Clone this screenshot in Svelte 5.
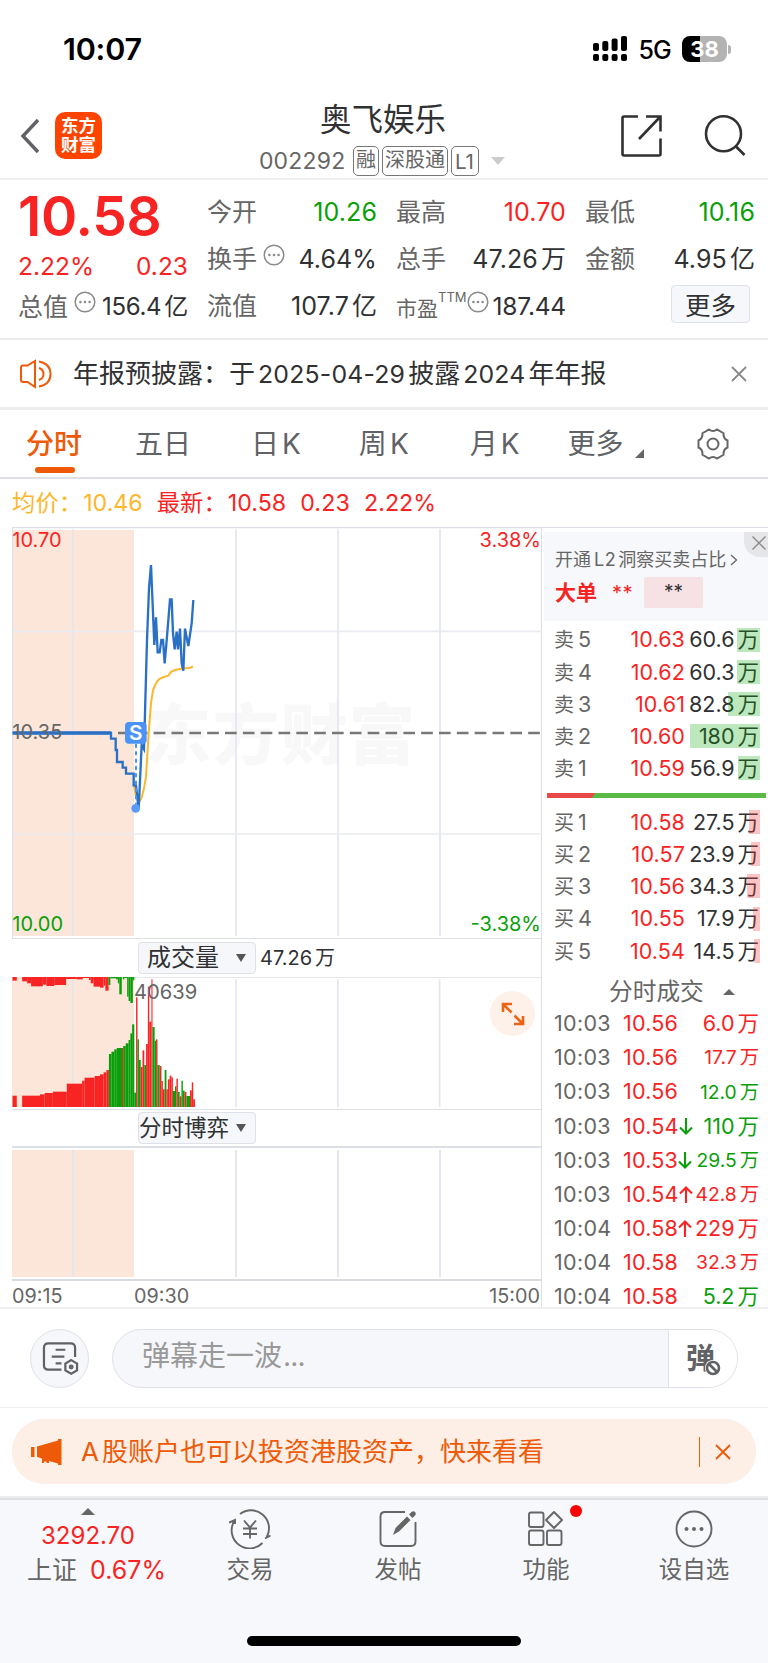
<script lang="ts">
    const quotes = [
        [
            { label: '今开', value: '10.26', tone: 'green' },
            { label: '换手', value: '4.64%', tip: true },
            { label: '流值', value: '107.7', unit: '亿' },
        ],
        [
            { label: '最高', value: '10.70', tone: 'red' },
            { label: '总手', value: '47.26', unit: '万' },
            { label: '市盈', value: '187.44', tip: true, sup: 'TTM' },
        ],
        [
            { label: '最低', value: '10.16', tone: 'green' },
            { label: '金额', value: '4.95', unit: '亿' },
        ],
    ];

    const asks = [
        { label: '卖', level: 5, price: '10.63', volume: '60.6', bar: 23 },
        { label: '卖', level: 4, price: '10.62', volume: '60.3', bar: 23 },
        { label: '卖', level: 3, price: '10.61', volume: '82.8', bar: 32 },
        { label: '卖', level: 2, price: '10.60', volume: '180', bar: 70 },
        { label: '卖', level: 1, price: '10.59', volume: '56.9', bar: 22 },
    ];

    const bids = [
        { label: '买', level: 1, price: '10.58', volume: '27.5', bar: 11 },
        { label: '买', level: 2, price: '10.57', volume: '23.9', bar: 9 },
        { label: '买', level: 3, price: '10.56', volume: '34.3', bar: 13 },
        { label: '买', level: 4, price: '10.55', volume: '17.9', bar: 7 },
        { label: '买', level: 5, price: '10.54', volume: '14.5', bar: 6 },
    ];

    const trades = [
        { time: '10:03', price: '10.56', volume: '6.0', tone: 'red' },
        { time: '10:03', price: '10.56', volume: '17.7', tone: 'red', small: true },
        { time: '10:03', price: '10.56', volume: '12.0', tone: 'green', small: true },
        { time: '10:03', price: '10.54', volume: '110', tone: 'green', dir: 'down' },
        { time: '10:03', price: '10.53', volume: '29.5', tone: 'green', dir: 'down', small: true },
        { time: '10:03', price: '10.54', volume: '42.8', tone: 'red', dir: 'rise', small: true },
        { time: '10:04', price: '10.58', volume: '229', tone: 'red', dir: 'rise' },
        { time: '10:04', price: '10.58', volume: '32.3', tone: 'red', small: true },
        { time: '10:04', price: '10.58', volume: '5.2', tone: 'green' },
    ];

    const RED = '#f82424';
    const GREEN = '#0a9f0a';

    // [x start, x end, y] measured from the top edge
    const topBars: [number, number, number, string][] = [
        [35, 47, 182, RED], [62, 76, 184, RED], [76, 87, 190, RED], [87, 120, 199, RED],
        [120, 130, 194, RED], [130, 152, 198, RED], [152, 185, 195, RED], [185, 215, 177, RED],
        [215, 232, 178, RED], [232, 249, 174, RED], [249, 254, 180, RED], [254, 262, 190, RED],
        [262, 280, 200, RED], [280, 290, 203, RED], [290, 295, 197, RED], [295, 304, 212, RED],
        [304, 309, 195, GREEN], [309, 325, 175, GREEN], [325, 330, 178, GREEN], [330, 334, 190, GREEN],
        [334, 341, 223, GREEN], [344, 348, 178, GREEN], [348, 356, 174, GREEN], [356, 360, 230, GREEN],
        [360, 365, 243, GREEN], [365, 372, 249, GREEN], [372, 376, 181, GREEN],
    ];

    // [x start, x end, y] standing on the baseline
    const bottomBars: [number, number, number, string][] = [
        [35, 47, 527, RED], [62, 112, 527, RED], [112, 125, 523, RED], [125, 148, 519, RED],
        [148, 187, 515, RED], [187, 230, 491, RED], [230, 237, 482, RED], [237, 265, 473, RED],
        [265, 280, 468, RED], [280, 290, 463, RED], [290, 298, 457, RED], [298, 305, 450, RED],
        [305, 312, 402, GREEN], [312, 320, 395, GREEN], [320, 327, 388, GREEN], [327, 345, 384, GREEN],
        [345, 352, 378, GREEN], [352, 360, 370, GREEN], [360, 365, 360, GREEN], [365, 370, 340, GREEN],
        [370, 376, 313, GREEN], [341, 344, 384, RED], [376, 381, 518, GREEN], [381, 385, 232, RED],
        [385, 389, 358, GREEN], [389, 394, 420, GREEN], [394, 399, 441, RED], [399, 404, 391, RED],
        [404, 409, 435, GREEN], [409, 414, 372, RED], [414, 418, 200, RED], [418, 424, 305, RED],
        [424, 427, 178, RED], [427, 433, 321, GREEN], [433, 437, 362, GREEN], [437, 441, 358, RED],
        [441, 447, 435, GREEN], [447, 452, 438, RED], [452, 456, 483, RED], [456, 461, 508, RED],
        [461, 466, 450, GREEN], [466, 470, 508, RED], [470, 475, 478, RED], [475, 480, 467, RED],
        [480, 484, 472, RED], [484, 490, 513, GREEN], [490, 494, 499, GREEN], [494, 498, 476, RED],
        [498, 503, 516, GREEN], [503, 508, 529, RED], [508, 512, 482, GREEN], [512, 517, 512, GREEN],
        [517, 522, 516, RED], [522, 532, 528, GREEN], [532, 537, 511, RED], [537, 541, 487, RED],
        [541, 546, 538, RED],
    ];
</script>

{#snippet tipIcon()}
    <svg class="tip" viewBox="0 0 22 22">
        <circle cx="11" cy="11" r="9.8" fill="none" stroke="#8a8a8a" stroke-width="1.5" />
        <circle cx="6.4" cy="11" r="1.3" /><circle cx="11" cy="11" r="1.3" /><circle cx="15.6" cy="11" r="1.3" />
    </svg>
{/snippet}

{#snippet bookRow(row, side)}
    <div class="book-row">
        <span class="level">{row.label}<i>{row.level}</i></span>
        <span class="price">{row.price}</span>
        <span class="volume">{row.volume}<b>万</b></span>
        <span class="depth {side}" style="width: {row.bar}px"></span>
    </div>
{/snippet}

<div class="app">
    <div class="status">
        <span class="clock">10:07</span>
        <svg class="signal" viewBox="0 0 34 26">
            <rect x="0" y="7" width="6" height="8" rx="2" /><rect x="9.3" y="5" width="6" height="10" rx="2" />
            <rect x="18.6" y="2.5" width="6" height="12.500" rx="2" /><rect x="28" y="0" width="6" height="15" rx="2" />
            <rect x="0" y="18" width="6" height="7" rx="2" /><rect x="9.3" y="18" width="6" height="7" rx="2" />
            <rect x="18.6" y="18" width="6" height="7" rx="2" /><rect x="28" y="18" width="6" height="7" rx="2" />
        </svg>
        <span class="network">5G</span>
        <div class="battery"><span>38</span></div>
        <i class="nub"></i>
    </div>

    <header>
        <svg class="back" viewBox="0 0 20 36"><path d="M18 2 3 18l15 16" /></svg>
        <div class="logo">东方<br />财富</div>
        <div class="title">
            <h1>奥飞娱乐</h1>
            <div class="code">
                <span class="digits">002292</span>
                <span class="badge">融</span><span class="badge">深股通</span><span class="badge latin">L1</span>
                <i class="caret"></i>
            </div>
        </div>
        <svg class="share" viewBox="0 0 44 44">
            <path d="M19 3.5H5q-1.500 0-1.500 1.500v36q0 1.500 1.500 1.500h35q1.500 0 1.500-1.500V25.500M27 3.500h14.500v15M41 4 20 26" />
        </svg>
        <svg class="search" viewBox="0 0 44 44"><circle cx="20.500" cy="20.700" r="17.500" /><path d="m33 33.500 8.500 8.500" /></svg>
    </header>

    <section class="stats">
        <div class="col first">
            <div class="big">10.58</div>
            <div class="cell change red"><span>2.22%</span><span>0.23</span></div>
            <div class="cell"><span class="name">总值</span>{@render tipIcon()}<span class="value">156.4<b>亿</b></span></div>
        </div>
        {#each quotes as column}
            <div class="col">
                {#each column as q}
                    <div class="cell">
                        <span class="name" class:narrow={q.sup}>{q.label}</span>
                        {#if q.sup}<span class="sup">{q.sup}</span>{/if}
                        {#if q.tip}{@render tipIcon()}{/if}
                        <span class="value {q.tone}">{q.value}{#if q.unit}<b>{q.unit}</b>{/if}</span>
                    </div>
                {/each}
                {#if column.length < 3}
                    <button class="more">更多</button>
                {/if}
            </div>
        {/each}
    </section>

    <section class="notice">
        <svg class="speaker" viewBox="0 0 34 30">
            <path d="M2 8.500q0-2 2-2h4.500L16 2v26l-7.500-5H4q-2 0-2-2zM20 9q4.500 1.500 4.500 6T20 21M20 2.500q11.500 2 11.500 12.500T20 27.500" />
        </svg>
        <p>年报预披露：于<span>2025-04-29</span>披露<span>2024</span>年年报</p>
        <svg class="close" viewBox="0 0 16 16"><path d="m1 1 14 14M15 1 1 15" /></svg>
    </section>

    <nav class="tabs">
        <span class="tab active">分时</span>
        <span class="tab">五日</span>
        <span class="tab">日<i>K</i></span>
        <span class="tab">周<i>K</i></span>
        <span class="tab">月<i>K</i></span>
        <span class="tab more-tab">更多</span>
        <svg class="gear" viewBox="0 0 32 32">
            <path d="M12 1.500q4 3 8 0l6.500 3.700q-.3 5.500 4 7.300v7q-4.300 1.800-4 7.300L20 30.500q-4-3-8 0l-6.500-3.700q.3-5.500-4-7.300v-7q4.300-1.800 4-7.300z" />
            <circle cx="16" cy="16" r="5.500" />
        </svg>
    </nav>

    <div class="legend">
        <span class="avg">均价：</span><span class="avg n1">10.46</span>
        <span>最新：</span><span class="n2">10.58</span><span class="n3">0.23</span><span>2.22%</span>
    </div>

    <section class="market">
        <div class="charts">
            <svg class="price-chart" viewBox="36 21 1590 1236">
                <rect x="36" y="30" width="366" height="1218" fill="#fce6da" />
                <text class="watermark" x="434" y="718">东方财富</text>
                <g stroke="#e3e6ed" stroke-width="5">
                    <path d="M219 28v1220M708 28v1220M1014 28v1220M1320 28v1220" />
                    <path d="M36 334h1590M36 942h1590" stroke="#e9ebf1" />
                    <path d="M36 23h1590M37.500 21v1236M36 1256h1590" stroke="#dcdfe6" stroke-width="4" />
                </g>
                <path d="M354 639H1624" stroke="#777" stroke-width="7" stroke-dasharray="35 18.500" />
                <g class="axis">
                    <text x="37" y="81" fill={RED}>10.70</text>
                    <text x="1623" y="81" fill={RED} text-anchor="end">3.38%</text>
                    <text x="37" y="1234" fill={GREEN}>10.00</text>
                    <text x="1623" y="1234" fill={GREEN} text-anchor="end">-3.38%</text>
                </g>
                <path
                    d="M401 790 408 830 418 845 424 835 432 805 438 770 446 640 453 550 459 510 468 490 475 480 484 474 495 470 505 467 514 455 525 450 545 446 571 443 579 439"
                    fill="none" stroke="#fdb72d" stroke-width="6"
                />
                <path
                    d="M38 639H333V656H347V690H351V726H368V743H378V761H401V796H408L416 868 425 675 432 688 441 360 447 205 453 135 463 375 468 292 473 397H479L484 360H489L494 430 501 350 510 238H515L519 340 524 388 530 335 534 388 540 326 545 430 550 452 555 326 565 378 575 310 580 240"
                    fill="none" stroke="#2a70c4" stroke-width="7"
                />
                <path d="M38 639H333" stroke="#2a70c4" stroke-width="11" />
                <text class="axis" x="37" y="658" fill="#666">10.35</text>
                <path d="M408 672V852" stroke="#4c93f8" stroke-width="6" stroke-dasharray="12 10" />
                <circle cx="407" cy="865" r="13" fill="#5a9bf8" />
                <rect x="375" y="606" width="65" height="65" rx="12" fill="#4c93f8" />
                <text class="marker" x="407.500" y="661">S</text>
            </svg>

            <div class="bar-head">
                <div class="select wide">成交量<i></i></div>
                <span class="total">47.26<b>万</b></span>
            </div>

            <div class="volume-box">
                <svg viewBox="33.600 171 1484 396" preserveAspectRatio="none">
                    <rect x="33.600" y="171" width="342" height="390" fill="#fce6da" />
                    <path d="M204.500 171v390M661 178v383M946 178v383M1231 178v383" stroke="#e3e6ed" stroke-width="4.500" />
                    <path d="M33.600 171h1484" stroke="#dcdfe6" stroke-width="4" />
                    {#each topBars as [x1, x2, y, color]}
                        <rect x={x1} y="171" width={x2 - x1} height={y - 171} fill={color} />
                    {/each}
                    {#each bottomBars as [x1, x2, y, color]}
                        <rect x={x1} {y} width={x2 - x1} height={561 - y} fill={color} />
                    {/each}
                </svg>
                <span class="peak">40639</span>
                <div class="expand">
                    <svg viewBox="0 0 24 24"><path d="M2 10V2h9M2.500 2.500l8 8M22 14v8h-9M21.500 21.500l-8-8" /></svg>
                </div>
            </div>

            <div class="bar-head second">
                <div class="select">分时博弈<i></i></div>
            </div>

            <div class="game-box">
                <div class="auction"></div>
                <div class="g1"></div><div class="g2"></div><div class="g2"></div>
            </div>

            <div class="times"><span>09:15</span><span>09:30</span><span class="end">15:00</span></div>
        </div>

        <aside>
            <div class="level2">
                <div class="promo-line">开通<i>L2</i>洞察买卖占比<svg viewBox="0 0 8 12"><path d="m1 1 5.500 5L1 11" /></svg></div>
                <div class="big-order"><strong>大单</strong><span class="stars">**</span><span class="masked">**</span></div>
                <div class="corner"><svg viewBox="0 0 14 14"><path d="m.5.5 13 13M13.500.5l-13 13" /></svg></div>
            </div>
            <div class="book">
                {#each asks as row}{@render bookRow(row, 'sell')}{/each}
            </div>
            <div class="ratio"></div>
            <div class="book buy-side">
                {#each bids as row}{@render bookRow(row, 'buy')}{/each}
            </div>
            <div class="trades-head">分时成交<i></i></div>
            {#each trades as t}
                <div class="trade">
                    <span class="time">{t.time}</span>
                    <span class="deal">{t.price}</span>
                    {#if t.dir}
                        <svg class="arrow {t.tone} {t.dir}" viewBox="0 0 14 17"><path d="M7 0v15M1 9.500l6 6 6-6" /></svg>
                    {/if}
                    <span class="amount {t.tone}" class:small={t.small}>{t.volume}<b>万</b></span>
                </div>
            {/each}
        </aside>
    </section>

    <section class="danmaku">
        <div class="round">
            <svg viewBox="0 0 38 36">
                <path d="M34 16.500V7q0-4.500-4.500-4.500h-23Q2 2.500 2 7v18q0 4.500 4.500 4.500H20M14 9h10M10 16h13M14 23h6" />
                <path d="m30 19.700 6 3.500v7l-6 3.500-6-3.500v-7z" />
                <circle cx="30" cy="26.700" r="1.400" />
            </svg>
        </div>
        <div class="field">
            <span class="placeholder">弹幕走一波<i>...</i></span>
            <div class="toggle">
                弹
                <svg viewBox="0 0 16 16"><circle cx="8" cy="8" r="6" /><path d="m4 4 8 8" /></svg>
            </div>
        </div>
    </section>

    <section class="banner-wrap">
        <div class="banner">
            <svg class="horn" viewBox="0 0 31 26">
                <path d="M0 8h3.500v10H0zM6 7.500 27 1.500V0h3.500v26H27v-1.500L18 22v2h-2.500v-1.500H13V24h-2v-4.500l-5-1.500z" />
            </svg>
            <p>A<span>股账户也可以投资港股资产，快来看看</span></p>
            <i class="bar"></i>
            <svg class="close" viewBox="0 0 16 16"><path d="m1 1 14 14M15 1 1 15" /></svg>
        </div>
    </section>

    <footer>
        <div class="items">
            <div class="index">
                <i class="up"></i>
                <span class="red">3292.70</span>
                <div><em>上证</em><span class="red">0.67%</span></div>
            </div>
            <div class="item">
                <svg viewBox="0 0 42 40">
                    <path d="M11 5A18 18 0 0 1 38 27.500l-.5 1.500M36 29.500l5.500-3M33.500 34A18 18 0 0 1 5 12.500l.5-1.500M0 13.500 6 11v4" />
                    <path d="m15 11.500 6 7 6-7M21 18.500v11M14 19.500h14M14 25h14" />
                </svg>
                交易
            </div>
            <div class="item">
                <svg viewBox="0 0 42 40">
                    <path d="M28 3H8Q3.500 3 3.500 7.500v25Q3.500 37 8 37h26q4.500 0 4.500-4.500V13" />
                    <path class="pencil" d="m16 26 2.500-7L30 7.500l3.500 3.500L22 22.500zM32 5.500l2.500-2.500q2-1.500 3.500 0t0 3.500L35.500 9z" />
                </svg>
                发帖
            </div>
            <div class="item">
                <svg viewBox="0 0 42 40">
                    <rect x="4" y="3.500" width="14.500" height="14.500" rx="2" /><rect x="4" y="21.500" width="14.500" height="14.500" rx="2" />
                    <rect x="22" y="21.500" width="14.500" height="14.500" rx="2" /><path d="m29 3 8 8-8 8-8-8z" stroke-linejoin="round" />
                </svg>
                功能
                <b class="dot"></b>
            </div>
            <div class="item">
                <svg viewBox="0 0 42 40">
                    <circle cx="21" cy="20" r="17.500" />
                    <g class="dots"><circle cx="13.500" cy="20" r="2" /><circle cx="21" cy="20" r="2" /><circle cx="28.500" cy="20" r="2" /></g>
                </svg>
                设自选
            </div>
        </div>
        <div class="home"></div>
    </footer>
</div>

<style>
    :global(body) {
        background: #fff;
    }

    .app {
        width: 768px;
        height: 1663px;
        overflow: hidden;
        display: flex;
        flex-direction: column;
        font-family: Inter, 'Noto Sans CJK SC', sans-serif;
        line-height: 1;
        color: #303133;
        background: #fff;
        white-space: nowrap;
    }

    .app * {
        box-sizing: border-box;
    }

    i,
    em {
        font-style: normal;
    }

    svg {
        flex: none;
        fill: none;
    }

    .red {
        color: #f82424;
    }

    .green {
        color: #0a9f0a;
    }

    .status {
        height: 95px;
        flex: none;
        display: flex;
        align-items: center;
        padding: 3px 37px 0 63px;
        color: #000;
    }

    .clock {
        font-size: 30.5px;
        font-weight: 600;
        letter-spacing: -0.2px;
        margin-right: auto;
    }

    .signal {
        width: 34px;
        height: 26px;
        fill: #000;
    }

    .network {
        font-size: 25px;
        font-weight: 500;
        margin: 2px 11px 0;
        letter-spacing: -0.8px;
    }

    .battery {
        width: 45px;
        height: 26px;
        border-radius: 8px;
        background: linear-gradient(90deg, #000 39%, #b3b3b3 39%);
        color: #fff;
        font-size: 22px;
        font-weight: 700;
        display: flex;
        align-items: center;
        justify-content: center;
    }

    .nub {
        width: 3px;
        height: 9px;
        margin-left: 1px;
        border-radius: 0 4px 4px 0;
        background: #b3b3b3;
    }

    header {
        height: 85px;
        flex: none;
        display: flex;
        border-bottom: 2px solid #efeff2;
        padding: 0 21px 0 20px;
    }

    .back {
        width: 20px;
        height: 36px;
        margin-top: 23px;
        stroke: #606266;
        stroke-width: 3.4;
    }

    .logo {
        width: 47px;
        height: 47px;
        margin: 17px 0 0 15px;
        border-radius: 10px;
        background: #ff4400;
        color: #fff;
        font-size: 17.5px;
        line-height: 19px;
        font-weight: 700;
        text-align: center;
        padding-top: 4px;
    }

    .title {
        width: 518px;
        padding: 9px 0 0 157px;
    }

    h1 {
        margin: 0 0 0 61px;
        font-size: 31.5px;
        line-height: 32px;
        font-weight: 400;
    }

    .code {
        display: flex;
        align-items: center;
        margin-top: 10px;
        color: #666;
        font-size: 22px;
    }

    .digits {
        width: 94px;
        font-size: 23px;
        letter-spacing: 0.2px;
    }

    .badge {
        height: 30px;
        border: 1.5px solid #777;
        border-radius: 5px;
        padding: 3px 2px 0;
        margin-right: 3px;
        font-size: 20px;
        line-height: 21px;
    }

    .latin {
        width: 28px;
        padding: 4px 0 0 3px;
        font-size: 20.5px;
    }

    .caret {
        margin-left: 9px;
        border: 7px solid transparent;
        border-top: 8px solid #ccc;
        border-bottom: 0;
    }

    .share {
        width: 44px;
        height: 44px;
        margin-top: 18px;
        stroke: #303133;
        stroke-width: 2.6;
    }

    .search {
        width: 44px;
        height: 44px;
        margin: 18px 0 0 40px;
        stroke: #303133;
        stroke-width: 2.6;
    }

    .stats {
        height: 160px;
        flex: none;
        display: grid;
        grid-template-columns: repeat(4, 170px);
        gap: 19px;
        padding: 9px 0 0 18px;
        border-bottom: 2px solid #ebebed;
        font-size: 24.5px;
    }

    .cell {
        height: 47px;
        display: flex;
        align-items: center;
    }

    .name {
        color: #666;
        font-size: 25px;
    }

    .name.narrow {
        font-size: 21px;
        padding-top: 4px;
    }

    .value {
        margin-left: auto;
        font-size: 25px;
        letter-spacing: 0.1px;
    }

    .value b,
    .total b,
    .volume b,
    .amount b {
        font-weight: 400;
        margin-left: 3px;
    }

    .tip {
        width: 22px;
        height: 22px;
        margin: -10px 0 0 6px;
        fill: #8a8a8a;
    }

    .first .value {
        font-size: 24px;
        letter-spacing: -0.3px;
    }

    .sup {
        font-size: 13px;
        color: #666;
        margin-top: -18px;
    }

    .sup + .tip {
        margin-left: 0;
    }

    .sup ~ .value {
        font-size: 24.5px;
        letter-spacing: -0.2px;
    }

    .first .big {
        height: 58px;
        line-height: 54px;
        font-size: 55px;
        font-weight: 600;
        color: #f82424;
        letter-spacing: -0.3px;
    }

    .first .change {
        height: 39px;
        justify-content: space-between;
    }

    .first .cell:last-child {
        height: 42px;
    }

    .more {
        display: block;
        width: 79px;
        height: 38px;
        margin: 2px 0 0 86px;
        border: 1.5px solid #dfe1e8;
        border-radius: 4px;
        background: #f6f7fa;
        color: #303133;
        font: 25.5px/34px 'Noto Sans CJK SC', sans-serif;
        padding: 0;
    }

    .notice {
        height: 70px;
        flex: none;
        display: flex;
        align-items: center;
        padding: 0 21px 0 19px;
        border-bottom: 3px solid #eeeeef;
    }

    .speaker {
        width: 34px;
        height: 30px;
        stroke: #ee5a07;
        stroke-width: 2;
    }

    .notice p {
        margin: 0 auto 0 20px;
        font-size: 26px;
    }

    .notice p span {
        font-size: 24.8px;
        margin: 0 3px;
        letter-spacing: 0.2px;
    }

    .close {
        width: 16px;
        height: 16px;
        stroke: #888;
        stroke-width: 1.8;
    }

    .tabs {
        height: 69px;
        flex: none;
        display: flex;
        border-bottom: 2px solid #dfe0e6;
        padding-left: 26px;
        color: #606266;
        font-size: 28px;
        line-height: 68px;
    }

    .tab {
        position: relative;
        margin-right: 61px;
    }

    .tab:nth-child(1) {
        margin-right: 53px;
    }

    .tab:nth-child(2) {
        margin-right: 60px;
    }

    .tab:nth-child(3) {
        margin-right: 58px;
    }

    .tab:nth-child(5) {
        margin-right: 48px;
    }

    .tab i {
        margin-left: 3px;
    }

    .active {
        color: #ee5a07;
        font-weight: 500;
    }

    .active::after {
        content: '';
        position: absolute;
        left: 9px;
        bottom: 4px;
        width: 40px;
        height: 6px;
        border-radius: 3px;
        background: #ee5a07;
    }

    .tab.more-tab {
        margin-right: 73px;
    }

    .more-tab::after {
        content: '';
        position: absolute;
        right: -20px;
        bottom: 19px;
        border-left: 9px solid transparent;
        border-bottom: 9px solid #666;
    }

    .gear {
        width: 32px;
        height: 32px;
        margin-top: 18px;
        stroke: #666;
        stroke-width: 2;
    }

    .legend {
        height: 48px;
        flex: none;
        display: flex;
        align-items: center;
        padding: 1px 0 0 12px;
        font-size: 23.2px;
        color: #f82424;
    }

    .legend > span:nth-child(odd) {
        letter-spacing: 0.2px;
    }

    .avg {
        color: #fdb72d;
    }

    .n1,
    .n2,
    .n3 {
        margin-right: 14px;
    }

    .legend .n1,
    .legend .n2 {
        margin-left: 1px;
    }

    .market {
        height: 782px;
        flex: none;
        display: flex;
        border-bottom: 2px solid #efeff1;
    }

    .charts {
        width: 542px;
        padding-left: 12px;
        border-right: 1.5px solid #dcdfe6;
    }

    .price-chart {
        display: block;
        width: 530px;
        height: 412px;
        font-family: Inter, 'Noto Sans CJK SC', sans-serif;
    }

    .axis,
    .axis text {
        font-size: 60px;
    }

    .watermark {
        font-size: 199px;
        font-weight: 900;
        fill: #f8f8f8;
        letter-spacing: 5px;
    }

    .marker {
        font-size: 62px;
        font-weight: 600;
        fill: #fff;
        text-anchor: middle;
    }

    .bar-head {
        height: 38px;
        display: flex;
        align-items: center;
        padding-left: 126px;
        font-size: 20px;
    }

    .select {
        width: 118px;
        height: 32px;
        display: flex;
        align-items: center;
        border: 1.5px solid #dfe1e8;
        border-radius: 4px;
        background: #f6f7fa;
        font-size: 22.5px;
        margin-right: 4px;
    }

    .select.wide {
        font-size: 24px;
        padding-left: 8px;
    }

    .select i {
        margin: 0 9px 0 auto;
        border: 5px solid transparent;
        border-top: 8px solid #555;
        border-bottom: 0;
    }

    .volume-box {
        position: relative;
        height: 132px;
    }

    .volume-box > svg {
        display: block;
        width: 530px;
        height: 132px;
    }

    .peak {
        position: absolute;
        left: 122px;
        top: 5px;
        font-size: 20.2px;
        color: #666;
    }

    .expand {
        position: absolute;
        left: 478px;
        top: 14px;
        width: 45px;
        height: 45px;
        border-radius: 50%;
        background: #fef1ea;
        display: flex;
        align-items: center;
        justify-content: center;
    }

    .expand svg {
        width: 24px;
        height: 24px;
        stroke: #ee6213;
        stroke-width: 2.6;
    }

    .bar-head.second {
        height: 39px;
        border-top: 1.5px solid #dcdfe6;
        border-bottom: 2px solid #dcdfe6;
    }

    .game-box {
        height: 133px;
        padding: 2px 0;
        display: flex;
        border-bottom: 2px solid #d8dbe0;
    }

    .auction {
        width: 122px;
        background: linear-gradient(90deg, transparent 60px, #e3e6ed 60px, #e3e6ed 61.5px, transparent 61.5px) #fce6da;
    }

    .g1,
    .g2 {
        width: 103px;
        border-right: 2px solid #e3e6ed;
    }

    .g2 {
        width: 102px;
    }

    .times {
        display: flex;
        padding: 6px 1px 0 0;
        font-size: 19.8px;
        color: #666;
    }

    .times span {
        width: 122px;
    }

    .times .end {
        width: auto;
        margin-left: auto;
    }

    aside {
        width: 226px;
        border-top: 1.5px solid #dcdfe6;
    }

    .level2 {
        position: relative;
        height: 89px;
        margin: 4px 0 0 2px;
        padding: 18px 0 0 11px;
        background: #f7f8fb;
        color: #666;
    }

    .promo-line {
        height: 20px;
        display: flex;
        align-items: center;
        font-size: 18px;
    }

    .promo-line i {
        margin: 0 2px 0 3px;
        letter-spacing: 0.5px;
    }

    .promo-line svg {
        width: 8px;
        height: 12px;
        margin-left: 4px;
        stroke: #666;
        stroke-width: 1.3;
    }

    .big-order {
        display: flex;
        align-items: center;
        margin-top: 7px;
        font-size: 21px;
        color: #f82424;
    }

    .stars {
        margin: 0 11px 0 15px;
        font-size: 20px;
        letter-spacing: 0.5px;
    }

    .masked {
        width: 59px;
        height: 31px;
        line-height: 30px;
        border-radius: 2px;
        background: #f6e1e4;
        color: #303133;
        font-size: 19px;
        text-align: center;
    }

    .corner {
        position: absolute;
        right: 0;
        top: 0;
        width: 24px;
        height: 25px;
        border-radius: 0 0 0 16px;
        background: #e6e6e8;
        padding: 4px 0 0 8px;
    }

    .corner svg {
        width: 14px;
        height: 14px;
        stroke: #888;
        stroke-width: 1.3;
    }

    .book {
        padding-top: 3px;
        height: 172px;
    }

    .book-row {
        position: relative;
        height: 32.2px;
        display: flex;
        align-items: center;
        padding: 0 9px 0 12px;
        font-size: 21.5px;
    }

    .level {
        width: 56px;
        color: #666;
        font-size: 20px;
    }

    .level i {
        font-size: 21.5px;
        margin-left: 4px;
    }

    .price {
        width: 75px;
        text-align: right;
        color: #f82424;
        letter-spacing: 0.1px;
    }

    .volume {
        margin-left: auto;
        font-size: 21.5px;
    }

    .depth {
        position: absolute;
        right: 8px;
        top: 3.5px;
        height: 24px;
        background: rgba(10, 170, 10, 0.27);
    }

    .depth.buy {
        background: rgba(250, 60, 60, 0.3);
    }

    .ratio {
        height: 5px;
        margin: 0 2px 0 5px;
        background: linear-gradient(125deg, #e84848 39px, #5bb946 40px);
    }

    .buy-side {
        padding-top: 8.5px;
        height: 168px;
    }

    .trades-head {
        height: 41px;
        display: flex;
        align-items: center;
        padding: 11px 0 0 67px;
        font-size: 23.7px;
        color: #666;
    }

    .trades-head i {
        margin-left: 19px;
        border: 6px solid transparent;
        border-bottom: 6px solid #666;
        border-top: 0;
    }

    .trade {
        height: 34.1px;
        display: flex;
        align-items: center;
        padding: 0 9px 0 12px;
        font-size: 21.5px;
    }

    .time {
        width: 69px;
        color: #666;
        letter-spacing: 0.3px;
    }

    .deal {
        color: #f82424;
        letter-spacing: 0.2px;
    }

    .arrow {
        width: 14px;
        height: 17px;
        stroke: currentColor;
        stroke-width: 2.1;
    }

    .arrow.rise {
        transform: scaleY(-1);
    }

    .amount {
        margin-left: auto;
    }

    .amount.small {
        font-size: 19.3px;
    }

    .danmaku {
        height: 99px;
        flex: none;
        display: flex;
        padding: 20px 30px 0;
        border-bottom: 1.5px solid #f0f0f2;
    }

    .round {
        width: 59px;
        height: 59px;
        border: 1.5px solid #dfe1e8;
        border-radius: 50%;
        background: #f6f7fa;
        padding: 11px 0 0 11px;
    }

    .round svg {
        width: 37px;
        height: 35px;
        stroke: #606266;
        stroke-width: 2.3;
    }

    .field {
        width: 626px;
        height: 59px;
        margin-left: 23px;
        display: flex;
        border: 1.5px solid #dfe1e8;
        border-radius: 30px;
        background: #f6f7fa;
        overflow: hidden;
    }

    .placeholder {
        width: 555px;
        padding: 12px 0 0 29px;
        font-size: 28px;
        color: #999;
    }

    .placeholder i {
        margin-left: 1px;
        letter-spacing: -0.8px;
    }

    .toggle {
        position: relative;
        flex: 1;
        padding: 14px 0 0 17px;
        border-left: 1.5px solid #dfe1e8;
        background: #fff;
        font-size: 29px;
        font-weight: 700;
        color: #606266;
    }

    .toggle svg {
        position: absolute;
        left: 36px;
        top: 30px;
        width: 16px;
        height: 16px;
        stroke: #606266;
        stroke-width: 2.6;
        background: #fff;
        border-radius: 50%;
    }

    .banner-wrap {
        height: 90px;
        flex: none;
        padding: 11px 12px 0;
        border-bottom: 2px solid #ededee;
    }

    .banner {
        height: 65px;
        border-radius: 32px;
        background: #fdeee6;
        display: flex;
        align-items: center;
        padding: 0 25px 0 19px;
        color: #ee5a07;
    }

    .horn {
        width: 31px;
        height: 26px;
        fill: #ee5a07;
    }

    .banner p {
        margin: 0 auto 0 19px;
        font-size: 26px;
    }

    .banner p span {
        margin-left: 3px;
    }

    .bar {
        width: 1.5px;
        height: 30px;
        margin-right: 15px;
        background: #ee5a07;
    }

    .banner .close {
        stroke: #ee5a07;
    }

    footer {
        flex: 1;
        border-top: 2px solid #dfe0e3;
        background: #f7f8fb;
    }

    .items {
        height: 136px;
        display: flex;
        color: #666;
    }

    .index {
        width: 176px;
        display: flex;
        flex-direction: column;
        align-items: center;
        padding-top: 8px;
        font-size: 24.5px;
    }

    .up {
        border: 7px solid transparent;
        border-bottom: 7px solid #666;
        border-top: 0;
    }

    .index > span {
        margin-top: 9px;
        font-size: 24px;
    }

    .index div {
        margin: 10px 0 0 17px;
        font-size: 25px;
    }

    .index em {
        margin-right: 13px;
    }

    .item {
        position: relative;
        width: 148px;
        display: flex;
        flex-direction: column;
        align-items: center;
        padding-top: 9px;
        font-size: 23.5px;
    }

    .item svg {
        width: 42px;
        height: 40px;
        margin-bottom: 9px;
        stroke: #666;
        stroke-width: 1.9;
    }

    .pencil,
    .dots {
        fill: #666;
        stroke: none;
    }

    .dot {
        position: absolute;
        left: 98px;
        top: 5px;
        width: 12px;
        height: 12px;
        border-radius: 50%;
        background: #f00;
    }

    .home {
        width: 274px;
        height: 10px;
        margin-left: 247px;
        border-radius: 5px;
        background: #000;
    }
</style>
